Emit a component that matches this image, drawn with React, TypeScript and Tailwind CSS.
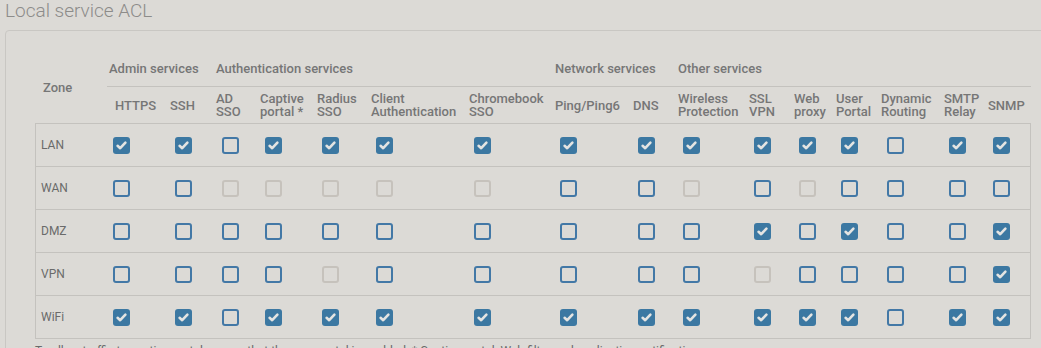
import React from "react";

type State = "c" | "u" | "d";

const columns = [
  { label: ["HTTPS"], cb: "ml-[6px]" },
  { label: ["SSH"], cb: "ml-[13px]" },
  { label: ["AD", "SSO"], cb: "ml-[14px]" },
  { label: ["Captive", "portal *"], cb: "ml-[13px]" },
  { label: ["Radius", "SSO"], cb: "ml-[13px]" },
  { label: ["Client", "Authentication"], cb: "ml-[13px]" },
  { label: ["Chromebook", "SSO"], cb: "ml-[13px]" },
  { label: ["Ping/Ping6"], cb: "ml-[13px]" },
  { label: ["DNS"], cb: "ml-[13px]" },
  { label: ["Wireless", "Protection"], cb: "ml-[13px]" },
  { label: ["SSL", "VPN"], cb: "ml-[13px]" },
  { label: ["Web", "proxy"], cb: "ml-[13px]" },
  { label: ["User", "Portal"], cb: "ml-[13px]" },
  { label: ["Dynamic", "Routing"], cb: "ml-[14px]" },
  { label: ["SMTP", "Relay"], cb: "ml-[13px]" },
  { label: ["SNMP"], cb: "ml-[13px]" },
];

// c = checked, u = unchecked, d = disabled
const rows = [
  { zone: "LAN", states: "ccucccccccccccucc".slice(0, 13) + "ucc" },
  { zone: "WAN", states: "uuddddduududuuuu" },
  { zone: "DMZ", states: "uuuuuuuuuucucuuc" },
  { zone: "VPN", states: "uuuuduuuuuduuuuc" },
  { zone: "WiFi", states: "ccucccccccccc" + "ucc" },
];

const headTpl =
  "grid-cols-[72px_55px_46px_44px_57px_54px_98px_86px_78px_45px_71px_45px_42px_45px_63px_44px_51px]";
const bodyTpl =
  "grid-cols-[71px_55px_46px_44px_57px_54px_98px_86px_78px_45px_71px_45px_42px_45px_63px_44px_50px]";

function Checkbox({ state }: { state: State }) {
  if (state === "c") {
    return (
      <span className="flex h-[17px] w-[17px] items-center justify-center rounded-[3px] bg-[#3c78a2]">
        <svg width="13" height="13" viewBox="0 0 13 13" fill="none">
          <path
            d="M2.6 6.8 L5.2 9.2 L10.4 3.6"
            stroke="#e4e4e2"
            strokeWidth="2.6"
            strokeLinecap="round"
            strokeLinejoin="round"
          />
        </svg>
      </span>
    );
  }
  if (state === "d") {
    return <span className="block h-[17px] w-[17px] rounded-[3px] border-2 border-[#c6c2bc]" />;
  }
  return <span className="block h-[17px] w-[17px] rounded-[3px] border-2 border-[#4378a6]" />;
}

export default function App() {
  return (
    <div
      className="h-[348px] w-[1041px] overflow-hidden bg-[#dcdad6] text-[13px] text-[#767676]"
      style={{ fontFamily: "Roboto, 'Liberation Sans', sans-serif" }}
    >
      <div className="pl-[5px]">
        <h2 className="h-[30px] text-[19px] leading-[22px] font-light text-[#8d8c8a]">Local service ACL</h2>
        <div className="w-[1060px] rounded-[4px] border border-[#c9c7c3] pl-[29px] pt-[21px]">
          {/* header */}
          <div className={`grid ${headTpl} w-[996px]`}>
            <div className="row-span-2 flex items-center pl-[8px] font-medium">Zone</div>
            <div className="col-span-2 flex h-[35px] items-center border-b border-[#c4c2be] pl-[2px] font-medium">
              Admin services
            </div>
            <div className="col-span-5 flex h-[35px] items-center border-b border-[#c4c2be] pl-[8px] font-medium">
              Authentication services
            </div>
            <div className="col-span-2 flex h-[35px] items-center border-b border-[#c4c2be] pl-[8px] font-medium">
              Network services
            </div>
            <div className="col-span-7 flex h-[35px] items-center border-b border-[#c4c2be] pl-[8px] font-medium">
              Other services
            </div>
            {columns.map((c) => (
              <div
                key={c.label.join(" ")}
                className="flex h-[36px] flex-col justify-center pl-[8px] leading-[13px] font-medium whitespace-nowrap"
              >
                {c.label.map((l) => (
                  <span key={l}>{l}</span>
                ))}
              </div>
            ))}
          </div>
          {/* body */}
          <div className="w-[996px] border border-[#c4c2be]">
            {rows.map((r, i) => (
              <div
                key={r.zone}
                className={`grid ${bodyTpl} items-center ${
                  i < rows.length - 1 ? "h-[43px] border-b border-[#c4c2be]" : "h-[42px]"
                }`}
              >
                <div className="pl-[5px] text-[12px] text-[#6a6a6a]">{r.zone}</div>
                {columns.map((c, j) => (
                  <div key={j} className={c.cb}>
                    <Checkbox state={r.states[j] as State} />
                  </div>
                ))}
              </div>
            ))}
          </div>
          <p className="mt-[4px] text-[12px] leading-[16px] text-[#6a6a6a] whitespace-nowrap">
            To allow traffic to captive portal, ensure that the user portal is enabled. * Captive portal: Web filter and application notification.
          </p>
        </div>
      </div>
    </div>
  );
}
